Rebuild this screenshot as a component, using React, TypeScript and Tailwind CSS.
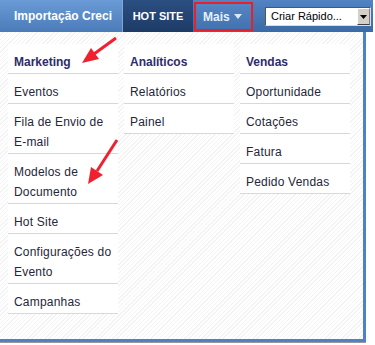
import React from "react";

const font = { fontFamily: '"Liberation Sans", Arial, sans-serif' };

function Column({ title, items }: { title: string; items: string[] }) {
  return (
    <div className="w-[110px] flex flex-col">
      <div className="bg-white px-[6px] pt-[8px] pb-px leading-5 text-[12px] font-bold text-[#2e2c6b] border-b border-[#d7d7dc]">
        {title}
      </div>
      {items.map((it) => (
        <div
          key={it}
          className="bg-white px-[6px] pt-[8px] pb-px leading-5 text-[12px] tracking-[0.2px] text-[#26263a] border-b border-[#d7d7dc]"
        >
          {it}
        </div>
      ))}
    </div>
  );
}

export default function App() {
  return (
    <div className="relative w-[375px] h-[345px] bg-white overflow-hidden" style={font}>
      {/* top bar */}
      <div className="flex h-[32px] w-[373px] bg-gradient-to-b from-[#5283c2] to-[#3b6aa6] items-stretch">
        <div className="w-[123px] flex items-center pl-[14px] bg-gradient-to-b from-[#6a9bd6] to-[#4b7cb9] border-r border-[#7fa6d6] text-white font-bold text-[12px]">
          Importação Creci
        </div>
        <div className="w-[70px] flex items-center justify-center bg-gradient-to-b from-[#2c4f82] to-[#1d3b66] text-white font-bold text-[11px]">
          HOT SITE
        </div>
        <div className="ml-px mt-[2px] h-[29px] w-[59px] border-2 border-[#e8202a] flex items-center pl-[7px] gap-[4px] bg-gradient-to-b from-[#5586c4] to-[#4272af] text-[#e6f0fb] font-bold text-[12px]">
          Mais
          <svg width="8" height="5" viewBox="0 0 8 5">
            <polygon points="0,0 8,0 4,5" fill="#dbe8f7" />
          </svg>
        </div>
        <div className="ml-[12px] mt-[7px] h-[19px] w-[106px] flex bg-white border border-t-[#555] border-l-[#555] border-b-[#ddd] border-r-[#ddd]">
          <div className="flex-1 pl-[5px] text-[11px] leading-[17px] text-black">Criar Rápido...</div>
          <div className="w-[13px] bg-[#d4d0c8] border border-t-white border-l-white border-b-[#404040] border-r-[#808080] flex items-center justify-center">
            <svg width="7" height="4" viewBox="0 0 7 4">
              <polygon points="0,0 7,0 3.5,4" fill="#000" />
            </svg>
          </div>
        </div>
      </div>

      {/* dropdown panel */}
      <div className="w-[366px] h-[310px] border-r-[3px] border-b-[3px] border-[#4d82c8] bg-[repeating-linear-gradient(135deg,#ffffff_0px,#ffffff_2px,#f3f3f3_2px,#f3f3f3_3px)] pt-[12px] pl-[8px] flex gap-[6px] shadow-[0_1px_0_#9a9a9a]">
        <Column
          title="Marketing"
          items={[
            "Eventos",
            "Fila de Envio de E-mail",
            "Modelos de Documento",
            "Hot Site",
            "Configurações do Evento",
            "Campanhas",
          ]}
        />
        <Column title="Analíticos" items={["Relatórios", "Painel"]} />
        <Column title="Vendas" items={["Oportunidade", "Cotações", "Fatura", "Pedido Vendas"]} />
      </div>

      {/* annotation arrows */}
      <svg className="absolute left-0 top-0 pointer-events-none" width="375" height="345">
        <line x1="116" y1="38" x2="94" y2="54" stroke="#f0202e" strokeWidth="3" />
        <polygon points="82,63 99,59 91,48" fill="#f0202e" />
        <line x1="117" y1="140" x2="97" y2="171" stroke="#f0202e" strokeWidth="3" />
        <polygon points="88,184 103,175 91,167" fill="#f0202e" />
      </svg>
    </div>
  );
}
